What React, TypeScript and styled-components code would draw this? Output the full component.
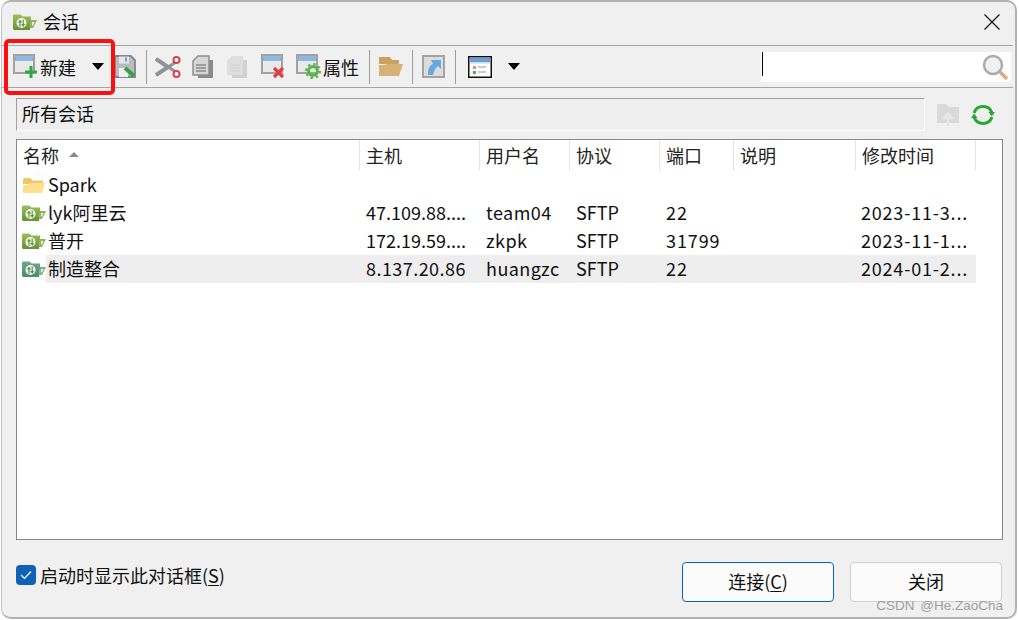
import React from 'react';
import styled, { createGlobalStyle } from 'styled-components';

const GlobalStyle = createGlobalStyle`
  html, body {
    margin: 0;
    padding: 0;
    background: #ffffff;
  }
  body {
    font-family: 'Noto Sans CJK SC', 'Noto Sans', sans-serif;
    font-size: 18px;
    color: #111111;
  }
`;

const Page = styled.div`
  position: relative;
  width: 1019px;
  height: 620px;
  overflow: hidden;
`;

const Dialog = styled.div`
  box-sizing: border-box;
  width: 1016px;
  height: 619px;
  margin-left: 1px;
  display: flex;
  flex-direction: column;
  background: #f0f0f0;
  border: 2px solid #b2b2b2;
  border-left: 1px solid #c4c4c4;
  border-radius: 10px;
`;

const TitleBar = styled.div`
  box-sizing: border-box;
  height: 43px;
  flex: none;
  display: flex;
  align-items: center;
  padding: 0 15px 6px 11px;
`;

const TitleIcon = styled.div`
  display: flex;
  margin-top: 3px;
`;

const TitleText = styled.span`
  margin-left: 6px;
  line-height: 24px;
`;

const CloseButton = styled.div`
  margin: 3px 0 0 auto;
  width: 16px;
  height: 16px;
  display: flex;
`;

const Toolbar = styled.div`
  height: 41px;
  flex: none;
  display: flex;
  align-items: center;
  border-top: 1px solid #a6a6a6;
  border-bottom: 1px solid #a6a6a6;
  padding-left: 11px;
  margin-right: 2px;
`;

const ToolSlot = styled.div<{ $left: number }>`
  margin-left: ${p => p.$left}px;
  display: flex;
  align-items: center;
  flex: none;
`;

const ToolLabel = styled.span`
  line-height: 24px;
  white-space: nowrap;
`;

const Divider = styled.div<{ $left: number }>`
  margin-left: ${p => p.$left}px;
  width: 1px;
  height: 34px;
  background: #9c9c9c;
  flex: none;
`;

const DropArrow = styled.div<{ $left: number }>`
  margin-left: ${p => p.$left}px;
  width: 0;
  height: 0;
  border-left: 6px solid transparent;
  border-right: 6px solid transparent;
  border-top: 7px solid #000000;
  flex: none;
`;

const SearchBox = styled.div`
  margin-left: auto;
  margin-right: 2px;
  width: 250px;
  height: 30px;
  background: #ffffff;
  display: flex;
  align-items: flex-start;
  justify-content: space-between;
  flex: none;
`;

const Caret = styled.div`
  width: 1px;
  height: 24px;
  margin-left: 1px;
  background: #000000;
`;

const SearchGlyph = styled.div`
  margin: 2px 2px 0 0;
  display: flex;
`;

const PathRow = styled.div`
  height: 33px;
  flex: none;
  margin: 10px 0 0 14px;
  display: flex;
  align-items: center;
`;

const PathField = styled.div`
  box-sizing: border-box;
  width: 909px;
  height: 33px;
  padding: 0 0 3px 5px;
  display: flex;
  align-items: center;
  background: #efefef;
  border-top: 1px solid #a0a0a0;
  border-left: 1px solid #a0a0a0;
  border-right: 1px solid #ffffff;
  border-bottom: 1px solid #ffffff;
`;

const PathAction = styled.div<{ $left: number }>`
  margin-left: ${p => p.$left}px;
  display: flex;
`;

const SessionList = styled.div`
  box-sizing: border-box;
  flex: none;
  width: 987px;
  height: 401px;
  margin: 8px 0 0 14px;
  background: #ffffff;
  border: 1px solid #82878f;
`;

const COLUMNS = '343px 120px 90px 90px 74px 122px 120px';

const HeaderRow = styled.div`
  display: grid;
  grid-template-columns: ${COLUMNS};
  height: 31px;
`;

const HeaderCell = styled.div`
  display: flex;
  align-items: center;
  padding: 0 0 2px 6px;
  box-sizing: border-box;
  border-right: 1px solid #e6e6e6;
  color: #222222;
`;

const SortMark = styled.div`
  margin-left: 10px;
  width: 0;
  height: 0;
  border-left: 5px solid transparent;
  border-right: 5px solid transparent;
  border-bottom: 5px solid #8a8a8a;
`;

const SessionRow = styled.div<{ $selected?: boolean }>`
  display: grid;
  grid-template-columns: ${COLUMNS};
  height: 28px;
  & > * {
    background: ${p => (p.$selected ? '#eeeeee' : 'transparent')};
  }
`;

const Cell = styled.div<{ $spacing?: number; $inset?: number }>`
  box-sizing: border-box;
  padding: 0 0 2px ${p => p.$inset ?? 6}px;
  display: flex;
  align-items: center;
  white-space: nowrap;
  overflow: hidden;
  letter-spacing: ${p => p.$spacing ?? 0.45}px;
`;

const NameCell = styled.div`
  display: flex;
  align-items: stretch;
  padding-left: 5px;
  && {
    background: transparent;
  }
`;

const NameIcon = styled.div`
  width: 24px;
  flex: none;
  display: flex;
  align-items: center;
`;

const NameLabel = styled.div<{ $selected?: boolean }>`
  flex: 1;
  padding: 0 0 2px 2px;
  display: flex;
  align-items: center;
  background: ${p => (p.$selected ? '#eeeeee' : 'transparent')};
`;

const Footer = styled.div`
  flex: 1;
  display: flex;
  align-items: flex-start;
  padding: 22px 13px 0 14px;
`;

const CheckRow = styled.label`
  display: flex;
  align-items: center;
  gap: 4px;
  margin-top: 1px;
  line-height: 24px;
`;

const CheckBox = styled.div`
  width: 20px;
  height: 20px;
  border-radius: 4px;
  background: #0f62b8;
  display: flex;
  align-items: center;
  justify-content: center;
`;

const Underlined = styled.span`
  text-decoration: underline;
  text-underline-offset: 2px;
  text-decoration-thickness: 1px;
`;

const ButtonRow = styled.div`
  margin-left: auto;
  display: flex;
  gap: 16px;
`;

const DialogButton = styled.button<{ $primary?: boolean }>`
  box-sizing: border-box;
  width: 152px;
  height: 40px;
  padding: 0 0 2px;
  font: inherit;
  color: #111111;
  background: #fbfbfb;
  border-radius: 4px;
  border: 1px solid ${p => (p.$primary ? '#0067c0' : '#d0d0d0')};
`;

const Highlight = styled.div`
  position: absolute;
  left: 4px;
  top: 39px;
  width: 111px;
  height: 56px;
  box-sizing: border-box;
  border: 4px solid #fb0f0f;
  border-radius: 5px;
  pointer-events: none;
`;

const Watermark = styled.div`
  position: absolute;
  right: 16px;
  top: 597px;
  font-family: 'Liberation Sans', sans-serif;
  font-size: 13.500px;
  line-height: 18px;
  word-spacing: 2px;
  color: #a0a0a0;
  white-space: nowrap;
`;

const SessionIcon = ({ selected }: { selected?: boolean }) => (
  <svg width="24" height="16" viewBox="0 0 24 16">
    <defs>
      <linearGradient id={selected ? 'folderSel' : 'folderDef'} x1="0" y1="0" x2="0" y2="1">
        <stop offset="0" stopColor={selected ? '#6fa888' : '#9cc05a'} />
        <stop offset="1" stopColor={selected ? '#4c8a68' : '#659235'} />
      </linearGradient>
    </defs>
    <path
      d="M0 1.500 1 0.500h6.500l2 2H18V7l-1 9H1l-1-1z"
      fill={`url(#${selected ? 'folderSel' : 'folderDef'})`}
    />
    <path d="M18 6h6l-4 8h-3z" fill={selected ? '#7fae90' : '#8fb458'} />
    <path d="M19 8h2.500l-1.500 3.500h-1z" fill="#eef4dc" />
    <circle cx="8.500" cy="9" r="5" fill="#f7faf0" />
    <path
      d="M7 13V7M5.500 8.500 7 6.500l1.500 2M10.200 5.500v6M8.700 10l1.500 2 1.500-2"
      stroke={selected ? '#4c8a68' : '#659235'}
      strokeWidth="1.200"
      fill="none"
    />
  </svg>
);

const FolderIcon = () => (
  <svg width="24" height="18" viewBox="0 0 24 18">
    <path d="M1 3.500 2.500 2h6l2 2.500H21V8H1z" fill="#efc766" />
    <path d="M1 17V9h5l2-2h15l-3 10z" fill="#fbe08e" />
  </svg>
);

const WindowIcon = ({ children }: { children?: React.ReactNode }) => (
  <svg width="25" height="25" viewBox="0 0 25 25">
    <rect x="1" y="1" width="20" height="18" fill="#e9e9e9" stroke="#a2a2a2" strokeWidth="2" />
    <rect x="2" y="2" width="18" height="5" fill="#8db8e4" />
    {children}
  </svg>
);

const CutIcon = () => (
  <svg width="26" height="24" viewBox="0 0 26 24">
    <path d="M1 4 24 19M1 20 24 5" stroke="#8f9498" strokeWidth="3" fill="none" />
    <path d="M1 4 13 12M1 20l12-8" stroke="#8f9498" strokeWidth="4" fill="none" />
    <circle cx="21.500" cy="5" r="3" fill="#fff" stroke="#d9444a" strokeWidth="2" />
    <circle cx="21.500" cy="19" r="3" fill="#fff" stroke="#d9444a" strokeWidth="2" />
  </svg>
);

const CopyIcon = () => (
  <svg width="22" height="24" viewBox="0 0 22 24">
    <rect x="6" y="5" width="15" height="18" fill="#8a8a8a" />
    <path d="M1 6 6 1h11v19H1z" fill="#d6d6d6" stroke="#8e8e8e" strokeWidth="1.500" />
    <path d="M4 10h10M4 13h10M4 16h10" stroke="#8a8a8a" strokeWidth="1.300" />
  </svg>
);

const PasteIcon = () => (
  <svg width="22" height="24" viewBox="0 0 22 24">
    <rect x="6" y="5" width="15" height="18" fill="#d2d2d2" />
    <path d="M1 6 6 1h11v19H1z" fill="#dedede" />
    <path d="M4 10h10M4 13h10M4 16h10" stroke="#d6d6d6" strokeWidth="1.300" />
  </svg>
);

const SaveIcon = () => (
  <svg width="23" height="24" viewBox="0 0 23 24">
    <path d="M1 1h16l4 4v17H1z" fill="#b9bcc0" stroke="#7f878c" strokeWidth="1.800" />
    <rect x="5" y="1.500" width="10" height="7" fill="#e6e6e6" />
    <rect x="11" y="2.500" width="2" height="4" fill="#6d9fd0" />
    <rect x="5" y="13" width="9" height="9" fill="#f0f0f0" />
    <path d="M11 13l9 8" stroke="#36a24a" strokeWidth="4" />
  </svg>
);

const OpenFolderIcon = () => (
  <svg width="25" height="21" viewBox="0 0 25 21">
    <path d="M1 20V1h11l2 3h7v4H1z" fill="#cd9f60" />
    <path d="M1 20V9h6l1-1h17l-4 12z" fill="#dab079" />
  </svg>
);

const LinkIcon = () => (
  <svg width="23" height="23" viewBox="0 0 23 23">
    <rect x="1" y="1" width="21" height="21" fill="#dcdcdc" stroke="#a3a3a3" strokeWidth="2" />
    <path d="M6 20c0-6 1-9 5-11L9 5h10v9l-3-3c-3 2-4 5-5 9z" fill="#66a8e0" />
  </svg>
);

const ViewIcon = () => (
  <svg width="24" height="22" viewBox="0 0 24 22">
    <rect x="0.750" y="0.750" width="22.500" height="20.500" fill="#ffffff" stroke="#111111" strokeWidth="1.500" />
    <rect x="2" y="2" width="20" height="4" fill="#6b9fd6" />
    <rect x="2" y="6" width="20" height="1.500" fill="#c7d9ec" />
    <rect x="5" y="10" width="3" height="3" fill="#f08a8a" />
    <rect x="5" y="15" width="3" height="3" fill="#3fb54f" />
    <path d="M10 11h8M10 16h8" stroke="#b9b9b9" strokeWidth="1.500" />
  </svg>
);

const MagnifierIcon = () => (
  <svg width="27" height="27" viewBox="0 0 27 27">
    <path d="M17 17l8 8" stroke="#dcac7a" strokeWidth="3.500" />
    <circle cx="11" cy="11" r="9" fill="#f1f1f1" stroke="#ababab" strokeWidth="2.500" />
  </svg>
);

const UploadIcon = () => (
  <svg width="23" height="23" viewBox="0 0 23 23">
    <path d="M0 1h9l3 3h10v16H0z" fill="#d9d9d9" />
    <path d="M11 23v-9M7 15l4-5 4 5z" stroke="#e6e6e6" strokeWidth="2.500" fill="#e6e6e6" />
  </svg>
);

const RefreshIcon = () => (
  <svg width="24" height="24" viewBox="0 0 24 24" fill="none">
    <path d="M3 10A9.500 9.500 0 0 1 21 10" stroke="#2aa632" strokeWidth="3" />
    <path d="M21 14A9.500 9.500 0 0 1 3 14" stroke="#2aa632" strokeWidth="3" />
    <path d="M17.500 9h6.500l-3.200 4.500z" fill="#2aa632" />
    <path d="M0 15h6.500L3.200 10.500z" fill="#2aa632" />
  </svg>
);

const sessions = [
  { name: 'lyk阿里云', host: '47.109.88....', user: 'team04', protocol: 'SFTP', port: '22', note: '', modified: '2023-11-3...' },
  { name: '普开', host: '172.19.59....', user: 'zkpk', protocol: 'SFTP', port: '31799', note: '', modified: '2023-11-1...' },
  { name: '制造整合', host: '8.137.20.86', user: 'huangzc', protocol: 'SFTP', port: '22', note: '', modified: '2024-01-2...', selected: true },
];

const headers = ['主机', '用户名', '协议', '端口', '说明', '修改时间'];

export default function App() {
  return (
    <Page>
      <GlobalStyle />
      <Dialog>
        <TitleBar>
          <TitleIcon><SessionIcon /></TitleIcon>
          <TitleText>会话</TitleText>
          <CloseButton>
            <svg width="16" height="16" viewBox="0 0 16 16">
              <path d="M0.500 0.500 15.500 15.500M15.500 0.500 0.500 15.500" stroke="#111" strokeWidth="1.200" />
            </svg>
          </CloseButton>
        </TitleBar>

        <Toolbar>
          <ToolSlot $left={0}>
            <WindowIcon>
              <path d="M18 12v12M12 18h12" stroke="#2fa83f" strokeWidth="3" />
            </WindowIcon>
          </ToolSlot>
          <ToolSlot $left={2}><ToolLabel>新建</ToolLabel></ToolSlot>
          <DropArrow $left={16} />
          <ToolSlot $left={10}><SaveIcon /></ToolSlot>
          <Divider $left={9} />
          <ToolSlot $left={8}><CutIcon /></ToolSlot>
          <ToolSlot $left={11}><CopyIcon /></ToolSlot>
          <ToolSlot $left={12}><PasteIcon /></ToolSlot>
          <ToolSlot $left={13}>
            <WindowIcon>
              <path d="M13 14l9 9M22 14l-9 9" stroke="#e2403f" strokeWidth="3.200" />
            </WindowIcon>
          </ToolSlot>
          <ToolSlot $left={10}>
            <WindowIcon>
              <circle cx="17" cy="17" r="4.500" fill="none" stroke="#55b44a" strokeWidth="3" />
              <circle cx="17" cy="17" r="7" fill="none" stroke="#55b44a" strokeWidth="2" strokeDasharray="2.500 3" />
            </WindowIcon>
          </ToolSlot>
          <ToolSlot $left={2}><ToolLabel>属性</ToolLabel></ToolSlot>
          <Divider $left={10} />
          <ToolSlot $left={8}><OpenFolderIcon /></ToolSlot>
          <Divider $left={9} />
          <ToolSlot $left={9}><LinkIcon /></ToolSlot>
          <Divider $left={10} />
          <ToolSlot $left={12}><ViewIcon /></ToolSlot>
          <DropArrow $left={16} />
          <SearchBox>
            <Caret />
            <SearchGlyph><MagnifierIcon /></SearchGlyph>
          </SearchBox>
        </Toolbar>

        <PathRow>
          <PathField>所有会话</PathField>
          <PathAction $left={12}><UploadIcon /></PathAction>
          <PathAction $left={11}><RefreshIcon /></PathAction>
        </PathRow>

        <SessionList>
          <HeaderRow>
            <HeaderCell>
              名称
              <SortMark />
            </HeaderCell>
            {headers.map(h => (
              <HeaderCell key={h}>{h}</HeaderCell>
            ))}
          </HeaderRow>
          <SessionRow>
            <NameCell>
              <NameIcon><FolderIcon /></NameIcon>
              <NameLabel>Spark</NameLabel>
            </NameCell>
          </SessionRow>
          {sessions.map(s => (
            <SessionRow key={s.name} $selected={s.selected}>
              <NameCell>
                <NameIcon><SessionIcon selected={s.selected} /></NameIcon>
                <NameLabel $selected={s.selected}>{s.name}</NameLabel>
              </NameCell>
              <Cell $spacing={s.host.endsWith('...') ? 0 : 0.45}>{s.host}</Cell>
              <Cell>{s.user}</Cell>
              <Cell $spacing={0}>{s.protocol}</Cell>
              <Cell $spacing={0.9}>{s.port}</Cell>
              <Cell>{s.note}</Cell>
              <Cell $spacing={0.8} $inset={5}>{s.modified}</Cell>
            </SessionRow>
          ))}
        </SessionList>

        <Footer>
          <CheckRow>
            <CheckBox>
              <svg width="12" height="10" viewBox="0 0 12 10" fill="none">
                <path d="M1 5l3.500 3.500L11 1.500" stroke="#ffffff" strokeWidth="1.200" />
              </svg>
            </CheckBox>
            <span>启动时显示此对话框(<Underlined>S</Underlined>)</span>
          </CheckRow>
          <ButtonRow>
            <DialogButton $primary>连接(<Underlined>C</Underlined>)</DialogButton>
            <DialogButton>关闭</DialogButton>
          </ButtonRow>
        </Footer>
      </Dialog>
      <Highlight />
      <Watermark>CSDN @He.ZaoCha</Watermark>
    </Page>
  );
}
